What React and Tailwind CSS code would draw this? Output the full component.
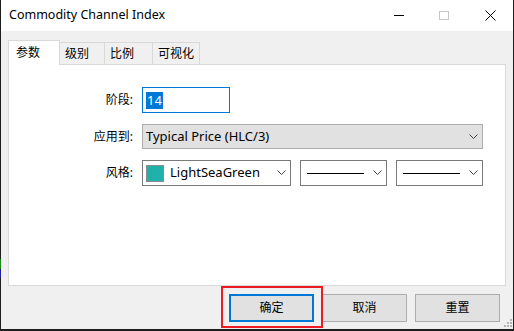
import React from "react";

const font = { fontFamily: '"Noto Sans", "Noto Sans CJK SC", sans-serif' };

function Chevron({ className = "" }) {
  return (
    <svg width="9" height="6" viewBox="0 0 9 6" className={className}>
      <path d="M0.5 0.5 L4.5 4.5 L8.5 0.5" fill="none" stroke="#404040" strokeWidth="1" />
    </svg>
  );
}

function Tab({ label, active, w }) {
  if (active) {
    return (
      <div
        className="h-[25px] -mb-px bg-white border border-b-0 border-[#d9d9d9] flex items-center pl-[7px] text-[12px] text-black relative z-10"
        style={{ width: w }}
      >
        {label}
      </div>
    );
  }
  return (
    <div
      className="h-[22px] bg-[#f0f0f0] border border-l-0 border-b-0 border-[#d9d9d9] flex items-center pl-[5px] text-[12px] text-black"
      style={{ width: w }}
    >
      {label}
    </div>
  );
}

function Button({ label, primary }) {
  return (
    <div
      className={
        "w-[85px] h-[28px] bg-[#e1e1e1] flex items-center justify-center text-[12px] text-black " +
        (primary ? "border-2 border-[#0078d7]" : "border border-[#adadad]")
      }
    >
      {label}
    </div>
  );
}

export default function App() {
  return (
    <div className="w-[514px] h-[331px] bg-[#1e1e1e] relative overflow-hidden" style={font}>
      {/* chart remnants on left edge */}
      <div className="absolute left-0 top-[259px] w-px h-[10px] bg-[#1a8a1a]" />
      <div className="absolute left-0 top-[270px] w-px h-[8px] bg-[#2020a0]" />
      <div className="ml-px w-[512px] h-[329px] bg-[#f0f0f0] flex flex-col relative">
        {/* title bar */}
        <div className="h-[31px] bg-white flex items-center shrink-0">
          <div className="pl-[8px] text-[12.5px] text-black flex-1 leading-none pb-[1px]">Commodity Channel Index</div>
          <div className="w-[46px] h-[31px] flex items-center justify-center ml-auto">
            <div className="w-[10px] h-px bg-black mr-[-2px]" />
          </div>
          <div className="w-[46px] h-[31px] flex items-center justify-center">
            <div className="w-[10px] h-[9px] border border-[#c8c8c8] mb-[1px]" />
          </div>
          <div className="w-[46px] h-[31px] flex items-center justify-center">
            <svg width="11" height="11" viewBox="0 0 11 11" className="mb-[1px]">
              <path d="M0.5 0.5 L10.5 10.5 M10.5 0.5 L0.5 10.5" stroke="#000" strokeWidth="1" fill="none" />
            </svg>
          </div>
        </div>

        {/* tabs */}
        <div className="pl-[7px] pt-[9px] flex items-end">
          <Tab label="参数" active w={52} />
          <Tab label="级别" w={45} />
          <Tab label="比例" w={48} />
          <Tab label="可视化" w={47} />
        </div>

        {/* panel */}
        <div className="ml-[7px] w-[498px] h-[222px] bg-white border border-[#d9d9d9] flex flex-col pt-[22px] gap-[11px]">
          <div className="flex items-center h-[26px]">
            <div className="w-[126px] text-right text-[12px] text-black pr-[2px]">阶段:</div>
            <div className="ml-[7px] w-[88px] h-[26px] border border-[#0078d7] bg-white flex items-center pl-[3px]">
              <span className="bg-[#0078d7] text-white text-[13px] leading-[17px] h-[17px] px-px">14</span>
            </div>
          </div>
          <div className="flex items-center h-[25px]">
            <div className="w-[126px] text-right text-[12px] text-black pr-[2px]">应用到:</div>
            <div className="ml-[7px] w-[341px] h-[25px] border border-[#adadad] bg-[#e1e1e1] flex items-center pl-[3px] pr-[4px]">
              <span className="text-[13px] text-black flex-1">Typical Price (HLC/3)</span>
              <Chevron />
            </div>
          </div>
          <div className="flex items-center h-[26px]">
            <div className="w-[126px] text-right text-[12px] text-black pr-[2px]">风格:</div>
            <div className="ml-[7px] w-[149px] h-[26px] border border-[#7a7a7a] bg-white flex items-center pl-[3px] pr-[4px]">
              <div className="w-[18px] h-[17px] border border-[#8c8c8c] bg-[#20b2aa]" />
              <span className="ml-[6px] text-[13px] text-black flex-1">LightSeaGreen</span>
              <Chevron />
            </div>
            <div className="ml-[9px] w-[87px] h-[26px] border border-[#7a7a7a] bg-white flex items-center pl-[6px] pr-[4px]">
              <div className="w-[57px] h-px bg-black" />
              <div className="flex-1" />
              <Chevron />
            </div>
            <div className="ml-[9px] w-[87px] h-[26px] border border-[#7a7a7a] bg-white flex items-center pl-[6px] pr-[4px]">
              <div className="w-[57px] h-px bg-black" />
              <div className="flex-1" />
              <Chevron />
            </div>
          </div>
        </div>

        {/* buttons */}
        <div className="flex pl-[228px] pt-[8px] gap-[8px]">
          <Button label="确定" primary />
          <Button label="取消" />
          <Button label="重置" />
        </div>

        {/* red annotation */}
        <div className="absolute left-[220px] top-[286px] w-[102px] h-[42px] border-2 border-[#ed1c24]" />

        {/* resize grip */}
        <svg className="absolute left-[502px] top-[318px]" width="10" height="10" viewBox="0 0 10 10">
          <rect x="7" y="1" width="2" height="2" fill="#b4b4b4" />
          <rect x="4" y="4" width="2" height="2" fill="#b4b4b4" />
          <rect x="7" y="4" width="2" height="2" fill="#b4b4b4" />
          <rect x="1" y="7" width="2" height="2" fill="#b4b4b4" />
          <rect x="4" y="7" width="2" height="2" fill="#b4b4b4" />
          <rect x="7" y="7" width="2" height="2" fill="#b4b4b4" />
        </svg>
      </div>
    </div>
  );
}
